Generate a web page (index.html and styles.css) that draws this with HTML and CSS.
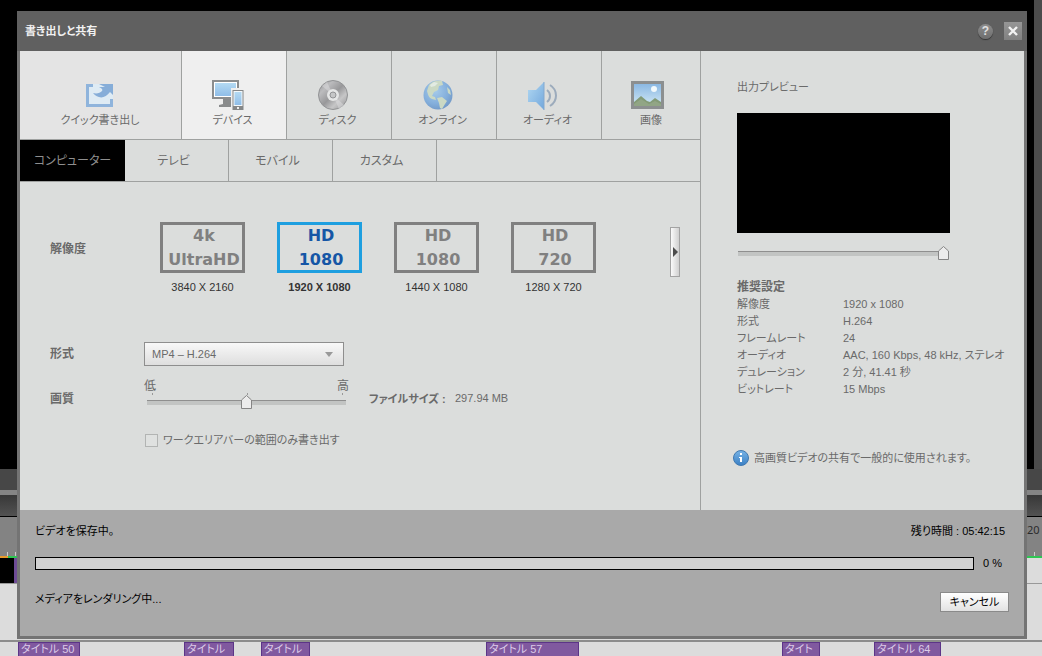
FILE: index.html
```html
<!DOCTYPE html>
<html lang="ja">
<head>
<meta charset="utf-8">
<meta name="viewport" content="width=device-width, initial-scale=1">
<title>書き出しと共有</title>
<link rel="stylesheet" href="styles.css">
</head>
<body>
<div class="app">
  <div class="workspace">
    <div class="monitor"></div>
    <div class="bar bar-status"></div>
    <div class="bar bar-split"></div>
    <div class="bar bar-tools"></div>
    <div class="ruler"><span class="ruler-ticks"></span><span class="ruler-end"><span>20</span><span class="ruler-ticks"></span></span></div>
    <div class="render-line"></div>
    <div class="track track-video"></div>
    <div class="track track-empty"></div>
    <div class="track track-title">
      <span class="clip" style="left:18px;width:62px">タイトル 50</span>
      <span class="clip" style="left:184px;width:50px">タイトル</span>
      <span class="clip" style="left:261px;width:49px">タイトル</span>
      <span class="clip" style="left:486px;width:93px">タイトル 57</span>
      <span class="clip" style="left:782px;width:38px">タイト</span>
      <span class="clip" style="left:874px;width:67px">タイトル 64</span>
    </div>
  </div>

  <section class="dialog" role="dialog" aria-labelledby="dialog-title">
    <header class="titlebar">
      <h1 id="dialog-title" class="title">書き出しと共有</h1>
      <button class="help" type="button" aria-label="ヘルプ">?</button>
      <button class="close" type="button" aria-label="閉じる">
        <svg width="10" height="10" viewBox="0 0 10 10"><path d="M1 1l8 8M9 1L1 9" stroke="#f2f2f2" stroke-width="2.4"/></svg>
      </button>
    </header>

    <main class="content">
      <div class="settings">
        <nav class="tabs">
          <button class="tab tab-quick" type="button">
            <svg class="tab-icon" width="32" height="32" viewBox="0 0 32 32">
              <rect x="3" y="5" width="26" height="22" fill="#deebf4"/>
              <path d="M9 6.500H3.500v20h24V20" fill="none" stroke="#8fb4dc" stroke-width="3"/>
              <path d="M15 5h14v11l-3-3c-5 7-12 7-17 1 4 1 7 0 9-2 1-1 0-3-3-4h6z" fill="#86add8"/>
            </svg>
            <span>クイック書き出し</span>
          </button>
          <button class="tab is-active" type="button">
            <svg class="tab-icon" width="32" height="32" viewBox="0 0 32 32">
              <defs><linearGradient id="screen" x1="0" y1="0" x2="0" y2="1"><stop offset="0" stop-color="#b4daf3"/><stop offset="1" stop-color="#8fbde8"/></linearGradient></defs>
              <path d="M11 19h8v6h3v3H7v-2l4-1z" fill="#898b8c"/>
              <rect x="1" y="2" width="25" height="17" fill="#fff" stroke="#8b8d8e" stroke-width="2"/>
              <rect x="3" y="4" width="21" height="13" fill="url(#screen)"/>
              <rect x="19" y="9" width="13" height="22" fill="#efefef"/>
              <rect x="20.500" y="11" width="11" height="20" fill="#858788"/>
              <rect x="21.500" y="12" width="9" height="15" fill="#f5f9fb"/>
              <rect x="22.500" y="13" width="7" height="13" fill="url(#screen)"/>
              <rect x="25" y="28" width="2" height="2" fill="#eee"/>
            </svg>
            <span>デバイス</span>
          </button>
          <button class="tab" type="button">
            <svg class="tab-icon" width="32" height="32" viewBox="0 0 32 32">
              <defs><linearGradient id="disc" x1="0" y1="0" x2="1" y2="1"><stop offset="0" stop-color="#8c8c8e"/><stop offset=".25" stop-color="#bcbcbe"/><stop offset=".5" stop-color="#98989a"/><stop offset=".7" stop-color="#c6c6c7"/><stop offset="1" stop-color="#8e8e90"/></linearGradient></defs>
              <circle cx="16" cy="16" r="14.500" fill="url(#disc)" stroke="#929395"/>
              <path d="M16 16L5 7l5-4zM16 16l11 10-5 4z" fill="#dededf" opacity=".5"/>
              <circle cx="16" cy="16" r="6" fill="#e5e6e6"/>
              <circle cx="16" cy="16" r="3" fill="#c5c6c7" stroke="#929395"/>
            </svg>
            <span>ディスク</span>
          </button>
          <button class="tab" type="button">
            <svg class="tab-icon" width="32" height="32" viewBox="0 0 32 32">
              <defs><radialGradient id="sea" cx=".4" cy=".35" r=".7"><stop offset="0" stop-color="#a6cbea"/><stop offset=".65" stop-color="#83aedb"/><stop offset="1" stop-color="#7198c6"/></radialGradient></defs>
              <circle cx="16" cy="16" r="14.500" fill="url(#sea)"/>
              <path d="M7 6c3-4 8-5 13-4l1 4-4 1-1 4-4 2-2 4 3 1 1 3-4-1c-3-1-4-4-5-8zM15 19l5-1 5 4-2 3-3 5-2-1-1-5zM25 8l3 3 1 5-3-2z" fill="#cbd9c4"/>
              <path d="M8 6l4-3 4 1-3 3-4 1z" fill="#e2ebe3"/>
            </svg>
            <span>オンライン</span>
          </button>
          <button class="tab" type="button">
            <svg class="tab-icon" width="32" height="32" viewBox="0 0 32 32">
              <defs><linearGradient id="cone" x1="0" y1="0" x2="1" y2="1"><stop offset="0" stop-color="#b1d8f2"/><stop offset="1" stop-color="#72a7dc"/></linearGradient></defs>
              <path d="M1 11h8l8-8v28l-8-8H1z" fill="url(#cone)"/>
              <path d="M17 3v28" stroke="#83a9cf"/>
              <path d="M20 11c4 3 4 9 0 12" fill="none" stroke="#9cabbc" stroke-width="2"/>
              <path d="M23 6c8 5 8 16 0 21" fill="none" stroke="#9cabbc" stroke-width="2"/>
            </svg>
            <span>オーディオ</span>
          </button>
          <button class="tab tab-image" type="button">
            <svg class="tab-icon" width="34" height="32" viewBox="0 0 34 32">
              <defs><linearGradient id="sky" x1="0" y1="0" x2="0" y2="1"><stop offset="0" stop-color="#86b5e2"/><stop offset="1" stop-color="#d7ecf6"/></linearGradient></defs>
              <rect x="2.500" y="3.500" width="30" height="25" fill="url(#sky)" stroke="#8c8f90" stroke-width="3"/>
              <circle cx="24" cy="10" r="3" fill="#f2f9fc"/>
              <path d="M4 23l7-6 6 5 3 1 5-4 6 4v4H4z" fill="#839a76"/>
              <path d="M4 27v-2l7-5 8 5 6-3 6 3v2z" fill="#91a585"/>
            </svg>
            <span>画像</span>
          </button>
        </nav>
        <nav class="subtabs">
          <button class="subtab is-active" type="button">コンピューター</button>
          <button class="subtab" type="button">テレビ</button>
          <button class="subtab" type="button">モバイル</button>
          <button class="subtab" type="button">カスタム</button>
        </nav>

        <form class="form">
          <div class="row row-resolution">
            <span class="label" id="res-label">解像度</span>
            <div class="presets" role="radiogroup" aria-labelledby="res-label">
              <label class="preset"><input class="preset-input" type="radio" name="res"><span class="tile"><span>4k</span><span>UltraHD</span></span><span class="caption">3840 X 2160</span></label>
              <label class="preset"><input class="preset-input" type="radio" name="res" checked><span class="tile"><span>HD</span><span>1080</span></span><span class="caption">1920 X 1080</span></label>
              <label class="preset"><input class="preset-input" type="radio" name="res"><span class="tile"><span>HD</span><span>1080</span></span><span class="caption">1440 X 1080</span></label>
              <label class="preset"><input class="preset-input" type="radio" name="res"><span class="tile"><span>HD</span><span>720</span></span><span class="caption">1280 X 720</span></label>
            </div>
            <button class="next" type="button" aria-label="次へ"><svg width="5" height="10" viewBox="0 0 5 10"><path d="M0 0l5 5-5 5z" fill="#4c4c4c"/></svg></button>
          </div>
          <div class="row row-format">
            <label class="label" for="format">形式</label>
            <select class="format" id="format"><option>MP4 – H.264</option></select>
          </div>
          <div class="row row-quality">
            <label class="label" for="quality">画質</label>
            <div class="quality">
              <div class="scale"><span>低</span><span>高</span></div>
              <div class="ticks"><span></span><span></span><span></span></div>
              <input class="slider" id="quality" type="range" min="0" max="100" value="50">
            </div>
            <span class="label size-label">ファイルサイズ :</span>
            <span class="size">297.94 MB</span>
          </div>
          <div class="row row-area">
            <input class="check" id="area" type="checkbox">
            <label for="area">ワークエリアバーの範囲のみ書き出す</label>
          </div>
        </form>
      </div>

      <aside class="preview">
        <h2 class="preview-title">出力プレビュー</h2>
        <div class="screen"></div>
        <input class="slider seek" type="range" min="0" max="100" value="100" aria-label="プレビュー位置">
        <h3 class="info-title">推奨設定</h3>
        <dl class="info">
          <dt>解像度</dt><dd>1920 x 1080</dd>
          <dt>形式</dt><dd>H.264</dd>
          <dt>フレームレート</dt><dd>24</dd>
          <dt>オーディオ</dt><dd>AAC, 160 Kbps, 48 kHz, ステレオ</dd>
          <dt>デュレーション</dt><dd>2 分, 41.41 秒</dd>
          <dt>ビットレート</dt><dd>15 Mbps</dd>
        </dl>
        <p class="note">
          <svg class="note-icon" width="16" height="16" viewBox="0 0 16 16"><defs><linearGradient id="badge" x1="0" y1="0" x2="0" y2="1"><stop offset="0" stop-color="#77b3e6"/><stop offset="1" stop-color="#3a7fc4"/></linearGradient></defs><circle cx="8" cy="8" r="7.500" fill="url(#badge)" stroke="#4079b0"/><rect x="7" y="3" width="2" height="2" fill="#fff"/><path d="M6 7h3v5H7V8H6z" fill="#fff"/></svg>
          <span>高画質ビデオの共有で一般的に使用されます。</span>
        </p>
      </aside>
    </main>

    <footer class="progress-panel">
      <div class="status"><span>ビデオを保存中。</span><span>残り時間 : 05:42:15</span></div>
      <div class="meter"><progress class="progress" id="progress" max="100" value="0"></progress><label class="percent" for="progress">0 %</label></div>
      <div class="actions"><span>メディアをレンダリング中...</span><button class="cancel" type="button">キャンセル</button></div>
    </footer>
  </section>
</div>
</body>
</html>
```
FILE: styles.css
```css
* { box-sizing: border-box; }

body {
  margin: 0;
  background: #000;
  color: #6a6a6a;
  font: 11px/16px "Liberation Sans", "Noto Sans CJK JP", sans-serif;
  font-feature-settings: "palt";
}

button, input, select {
  margin: 0;
  padding: 0;
  border: 0;
  color: inherit;
  font: inherit;
  font-feature-settings: inherit;
}

h1, h2, h3, p, dl, dd { margin: 0; font-size: inherit; }

.app { display: grid; min-height: 100vh; }
.workspace, .dialog { grid-area: 1 / 1; min-width: 0; }

/* Editor behind the dialog */
.workspace {
  display: grid;
  grid-template-rows: 1fr 21px 5px 22px 39px 2px 26px 58px 14px;
}
.monitor { background: #000; border-right: 8px solid #4b4b4b; }
.bar-status { background: #474747; }
.bar-split { background: #858585; }
.bar-tools { background: linear-gradient(#383838, #525252); border-bottom: 1px solid #000; }
.ruler { display: flex; justify-content: space-between; background: #838383; color: #2c2c2c; font-family: "Noto Sans", sans-serif; }
.ruler-ticks { align-self: flex-end; width: 16px; height: 4px; background: repeating-linear-gradient(90deg, transparent 0 7px, #ccc 7px 8px); }
.ruler-end { display: flex; flex-direction: column; justify-content: space-between; width: 15px; padding-top: 5px; }
.ruler-end .ruler-ticks { width: 15px; }
.render-line { background: linear-gradient(90deg, #e89a2c 8px, #2fc653 8px); }
.track { background: #dcdcdc; border-bottom: 1px solid #999; }
.track-video { background: linear-gradient(90deg, #000 14px, #6e4b95 14px 17px, #dcdcdc 17px); }
.track-empty { border-bottom: 2px solid #8c8c8c; }
.track-title { position: relative; border: 0; }
.clip {
  position: absolute;
  top: 0;
  height: 14px;
  padding: 0 2px;
  border: 1px solid #5c3488;
  border-bottom: 0;
  background: #80599f;
  color: #dccbe8;
  line-height: 13px;
  white-space: nowrap;
}

/* Dialog frame */
.dialog {
  display: flex;
  flex-direction: column;
  margin: 11px 15px 17px 17px;
  border: solid #747474;
  border-width: 0 3px 3px;
  background: #dbdddc;
}
.titlebar {
  display: flex;
  align-items: center;
  gap: 11px;
  height: 40px;
  margin: 0 -3px;
  padding: 0 5px 0 8px;
  background: #606060;
  color: #f2f2f2;
}
.title { flex: 1; }
.help {
  width: 15px;
  height: 15px;
  border-radius: 50%;
  background: linear-gradient(#8c8c8c, #6e6e6e);
  box-shadow: 0 1px 1px #333;
  color: #e0e0e0;
  font-size: 12px;
  font-weight: bold;
  line-height: 15px;
}
.close {
  display: grid;
  place-items: center;
  width: 18px;
  height: 18px;
  background: linear-gradient(#969696, #818181);
}
.content { display: grid; flex: 1; grid-template-columns: minmax(0, 1fr) 324px; }

/* Tabs */
.tabs { display: grid; grid-template-columns: 162px repeat(4, 105px) 1fr; border-bottom: 1px solid #9fa1a0; }
.tab {
  display: flex;
  flex-direction: column;
  align-items: center;
  gap: 1px;
  height: 88px;
  padding: 28px 3px 0 0;
  border-right: 1px solid #9fa1a0;
  background: #dbdddc;
}
.tab-icon { flex: none; margin-right: 9px; }
.tab-quick { padding-right: 1px; background: #e4e4e4; }
.tab-quick .tab-icon { margin-right: 0; }
.tab-image { padding-right: 0; border-right: 0; }
.tab.is-active { background: #efefef; }
.subtabs { display: flex; border-bottom: 1px solid #9fa1a0; }
.subtab { width: 104px; height: 41px; padding-right: 6px; border-right: 1px solid #9fa1a0; background: none; font-size: 12px; }
.subtab.is-active { width: 105px; padding: 0; border: 0; background: #000; color: #8f8f8f; }

/* Settings form */
.form { padding: 40px 20px 0 30px; }
.row { display: flex; }
.label { flex: none; width: 94px; font-size: 12px; font-weight: bold; }
.row-resolution { align-items: flex-start; }
.row-resolution .label { margin-top: 19px; }
.presets { display: flex; gap: 32px; padding-left: 16px; }
.preset { position: relative; display: flex; flex-direction: column; align-items: center; gap: 6px; width: 85px; }
.preset-input { position: absolute; appearance: none; }
.tile {
  display: flex;
  flex-direction: column;
  align-items: center;
  justify-content: center;
  width: 85px;
  height: 51px;
  padding-left: 3px;
  border: 3px solid #808080;
  color: #808080;
  font: bold 16px/24px "DejaVu Sans", sans-serif;
}
.caption { color: #333; }
.preset-input:checked ~ .tile { border-color: #1e9fe0; color: #1556a6; }
.preset-input:checked ~ .caption { font-weight: bold; }
.next {
  display: grid;
  place-items: center;
  width: 10px;
  height: 50px;
  margin: 5px 0 0 auto;
  border: 1px solid #a3a3a3;
  background: linear-gradient(90deg, #fafafa, #d0d0d0);
}
.row-format { align-items: center; margin-top: 47px; }
.format {
  width: 200px;
  height: 24px;
  padding: 0 7px;
  appearance: none;
  border: 1px solid #8e8e8e;
  border-radius: 0;
  background: url("data:image/svg+xml,%3Csvg xmlns='http://www.w3.org/2000/svg' width='8' height='5'%3E%3Cpath d='M0 0h8L4 5z' fill='%23999'/%3E%3C/svg%3E") no-repeat right 10px center, linear-gradient(#f8f8f8, #dedede);
}
.row-quality { margin-top: 13px; }
.row-quality > .label { margin-top: 12px; }
.quality { width: 205px; }
.scale { display: flex; justify-content: space-between; font-size: 12px; line-height: 14px; }
.ticks { display: flex; justify-content: space-between; height: 2px; padding: 0 6px 0 8px; }
.ticks span { width: 1px; background: #999; }
.slider {
  display: block;
  width: 199px;
  height: 14px;
  margin: 0 3px;
  appearance: none;
  background: linear-gradient(#8f8f8f 1px, #c2c4c3 1px) no-repeat center / 100% 5px;
}
.slider::-webkit-slider-thumb {
  width: 11px;
  height: 14px;
  appearance: none;
  background: url("data:image/svg+xml,%3Csvg xmlns='http://www.w3.org/2000/svg' width='11' height='14'%3E%3Cpath d='M.5 13.500V5l5-4.500 5 4.500v8.500z' fill='%23ececec' stroke='%23858585'/%3E%3C/svg%3E") no-repeat;
}
.row-quality > .size-label { width: 86px; margin-left: 20px; font-size: 11px; }
.size { margin-top: 11px; }
.row-area { align-items: center; gap: 5px; margin-top: 23px; padding-left: 95px; }
.check { width: 13px; height: 13px; appearance: none; border: 1px solid #b2b4b3; background: #dfe1e0; }

/* Output preview */
.preview { padding: 28px 16px 0 36px; border-left: 1px solid #9fa1a0; }
.preview-title { font-weight: normal; }
.screen { width: 213px; height: 120px; margin-top: 18px; background: #000; }
.seek { width: 211px; margin: 13px 1px 0; }
.info-title { margin-top: 19px; font-size: 12px; }
.info { display: grid; grid-template-columns: 106px 1fr; margin-top: 1px; line-height: 17px; }
.info dd { white-space: nowrap; }
.note { display: flex; gap: 5px; margin: 52px 0 0 -4px; white-space: nowrap; }
.note-icon { flex: none; }

/* Progress */
.progress-panel { padding: 12px 15px 24px; background: #a9a9a9; color: #000; }
.status, .actions { display: flex; justify-content: space-between; }
.status { padding-right: 4px; line-height: 18px; }
.meter { display: flex; align-items: center; gap: 9px; margin-top: 14px; }
.percent { width: 26px; line-height: 18px; }
.progress { flex: 1; height: 13px; appearance: none; border: 1px solid #000; background: #d1d1d1; }
.progress::-webkit-progress-bar { background: #d1d1d1; }
.progress::-webkit-progress-value { background: #4a90d0; }
.actions { align-items: flex-start; margin-top: 20px; line-height: 14px; }
.cancel { width: 69px; height: 20px; border: 1px solid #8a8a8a; background: linear-gradient(#fff, #e2e2e2); }
```
